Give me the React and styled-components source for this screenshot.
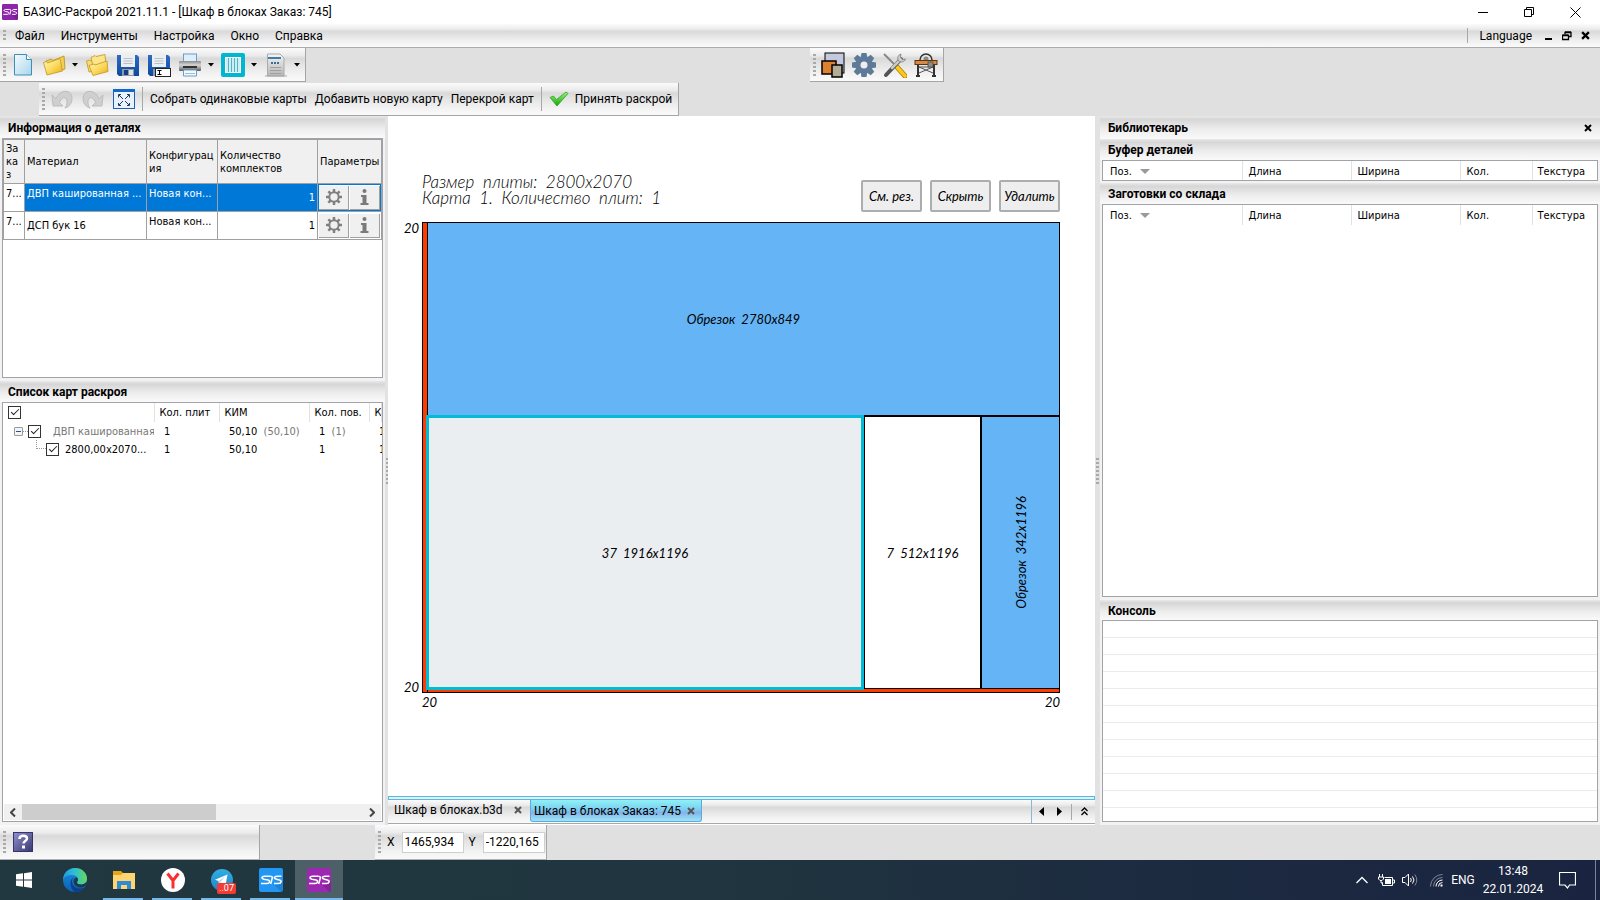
import React from "react";
import styled, { createGlobalStyle, css } from "styled-components";

const UI = `Roboto, "Noto Sans", sans-serif`;
const GRID = `"DejaVu Sans Condensed", "DejaVu Sans", sans-serif`;
const CAD = `Lato, "Open Sans", sans-serif`;

const barFill = "linear-gradient(#fbfbfb 0%, #ececec 22%, #d9d9d9 32%, #e4e4e4 50%, #f2f2f2 78%, #fafafa 100%)";

const GlobalStyle = createGlobalStyle`
  *, *::before, *::after { box-sizing: border-box; }
  body { margin: 0; background: #e0e0e0; color: #000; font: 12px/16px ${UI}; }
  button, input { font: inherit; color: inherit; margin: 0; padding: 0; border: 0; background: none; border-radius: 0; }
  button { cursor: default; }
  h1, h2 { margin: 0; font: inherit; }
  svg { display: block; flex: none; }
  table { border-collapse: collapse; border-spacing: 0; table-layout: fixed; width: 100%; }
  th, td { padding: 0; font-weight: 400; text-align: left; overflow: hidden; white-space: nowrap; }
`;

/* ---------- window shell ---------- */

const Window = styled.div`
  display: grid;
  grid-template-rows: 24px 24px 68px 1fr 35px 40px;
  grid-template-columns: minmax(0, 1fr);
  min-height: 100vh;
`;

const TitleBar = styled.header`
  display: flex;
  align-items: center;
  gap: 5px;
  padding: 0 2px;
  background: #fff;
`;

const AppTitle = styled.h1`
  flex: 1;
  font-size: 12px;
`;

const WindowButtons = styled.div`
  display: flex;
`;

const WindowButton = styled.button`
  display: grid;
  place-items: center;
  width: 46px;
  height: 24px;
`;

const MenuBar = styled.nav`
  display: flex;
  align-items: center;
  padding: 0 6px 0 2px;
  background: ${barFill};
  border-bottom: 1px solid #ababab;
`;

const MenuItem = styled.button`
  padding: 0 8px;
`;

const Spacer = styled.div`
  flex: 1;
`;

const ChildButton = styled.button`
  display: grid;
  place-items: center;
  width: 18px;
  height: 20px;
`;

const Grip = styled.span`
  flex: none;
  width: 3px;
  height: ${(p) => p.$h || 22}px;
  margin: 0 1px;
  background: repeating-linear-gradient(#a9a9a9 0 2px, transparent 2px 4px);
`;

const Rule = styled.span`
  flex: none;
  width: 1px;
  height: ${(p) => p.$h || 24}px;
  margin: 0 3px;
  background: #a8a8a8;
`;

/* ---------- toolbars ---------- */

const ToolArea = styled.div`
  display: grid;
  grid-template-rows: 34px 33px;
  row-gap: 1px;
`;

const ToolRow = styled.div`
  display: grid;
  grid-template-columns: ${(p) => p.$cols};
  padding-left: ${(p) => p.$indent || 0}px;
`;

const RightTools = styled.div`
  display: grid;
  padding-left: 10px;
`;

const Toolbar = styled.div`
  display: flex;
  align-items: center;
  justify-self: start;
  padding: 0 2px;
  background: ${barFill};
  border-right: 1px solid #a5a5a5;
  border-bottom: 1px solid #a5a5a5;
`;

const ToolButton = styled.button`
  display: grid;
  place-items: center;
  width: 31px;
  height: 28px;
`;

const DropButton = styled.button`
  display: grid;
  place-items: center;
  width: 12px;
  height: 28px;
`;

const TextTool = styled.button`
  display: flex;
  align-items: center;
  gap: 6px;
  height: 28px;
  padding: 0 4px;
  white-space: nowrap;
`;

/* ---------- panels ---------- */

const Workspace = styled.main`
  display: grid;
  grid-template-columns: 385px 3px minmax(0, 1fr) 5px 500px;
`;

const Splitter = styled.div`
  display: grid;
  place-items: center;
  background: #e2e2e2;
`;

const Side = styled.section`
  display: flex;
  flex-direction: column;
  min-width: 0;
  padding-bottom: 3px;
  background: #f2f2f2;
`;

const PanelTitle = styled.h2`
  display: flex;
  flex: none;
  align-items: center;
  justify-content: space-between;
  height: ${(p) => p.$h || 21}px;
  padding: 1px 8px 0;
  background: linear-gradient(#e9e9e9, #d6d6d6 15%, #ececec 55%, #fafafa);
  font-weight: 700;
`;

const Frame = styled.div`
  flex: ${(p) => (p.$h ? `0 0 ${p.$h}px` : "1 0 auto")};
  display: flex;
  flex-direction: column;
  margin: 0 2px ${(p) => p.$mb || 0}px;
  border: 1px solid #a2a2aa;
  background: #fff;
  font: 11px/13px ${GRID};
  overflow: hidden;
`;

const PartsTable = styled.table`
  th, td { border: 1px solid #a0a0a0; }
  th { height: 44px; padding: 0 2px; background: #f0f0f0; white-space: normal; word-break: break-all; }
  th:first-child { padding-right: 4px; }
  th:last-child { padding-right: 0; }
  td { height: 28px; padding: 0 2px; }
`;

const Cell = styled.td`
  vertical-align: ${(p) => (p.$top ? "top" : "middle")};
  text-align: ${(p) => (p.$right ? "right" : "left")};
  text-overflow: ellipsis;
  ${(p) => p.$selected && css`background: #0078d7; color: #fff;`}
  && { padding-top: ${(p) => (p.$top ? 3 : 0)}px; }
`;

const ActionsCell = styled.td`
  && { padding: 0; }
  ${(p) => p.$selected && css`box-shadow: inset 0 0 0 1px #0078d7;`}
`;

const Actions = styled.div`
  display: grid;
  grid-template-columns: 1fr 1fr;
  gap: 1px;
  padding: 1px;
`;

const CellButton = styled.button`
  display: grid;
  place-items: center;
  height: 24px;
  background: #f0f0f0;
  border-right: 1px solid #a0a0a0;
  border-bottom: 1px solid #a0a0a0;
`;

const MapTable = styled.table`
  td, th { height: 18px; padding-left: 10px; }
  td:first-child { padding-left: 9px; }
  th { height: 19px; padding-left: 5px; border-right: 1px solid #e2e2e2; }
`;

const Muted = styled.span`
  color: #777;
`;

const TreeCell = styled.div`
  display: flex;
  align-items: center;
  gap: ${(p) => p.$gap || 0}px;
  margin-left: ${(p) => p.$level || 0}px;
`;

const Check = styled.input`
  appearance: none;
  flex: none;
  width: 13px;
  height: 13px;
  border: 1px solid #333;
  background: #fff;
  display: grid;
  place-items: center;
  &:checked::after {
    content: "";
    width: 8px;
    height: 4px;
    margin-bottom: 3px;
    border-left: 1px solid #222;
    border-bottom: 1px solid #222;
    transform: rotate(-45deg);
  }
`;

const Expander = styled.button`
  flex: none;
  display: grid;
  place-items: center;
  width: 9px;
  height: 9px;
  border: 1px solid #999;
  border-radius: 1px;
  background: #f4f4f4;
  &::after { content: ""; width: 5px; height: 1px; background: #2b4f9c; }
`;

const Dots = styled.span`
  flex: none;
  width: ${(p) => p.$w}px;
  height: ${(p) => p.$h || 1}px;
  border-bottom: 1px dotted #999;
  border-left: ${(p) => (p.$h ? "1px dotted #999" : 0)};
  margin-bottom: ${(p) => (p.$h ? 9 : 0)}px;
`;

const ScrollBar = styled.div`
  display: grid;
  grid-template-columns: 18px 1fr 18px;
  align-items: center;
  height: 16px;
  margin: auto 1px 1px;
  background: #f0f0f0;
`;

const ScrollArrow = styled.button`
  display: grid;
  place-items: center;
`;

const Thumb = styled.div`
  width: 57%;
  height: 16px;
  background: #cdcdcd;
`;

const StockTable = styled.table`
  th { height: 20px; padding-left: 7px; border-right: 1px solid #e2e2e2; }
  th + th { padding-left: 6px; }
  th:last-child { border-right: 0; padding-left: 5px; }
`;

const SortHead = styled.span`
  display: flex;
  align-items: center;
  gap: 8px;
`;

const ConsoleLines = styled.div`
  flex: 1;
  background: repeating-linear-gradient(#fff 0 16px, #ececec 16px 17px);
`;

/* ---------- cutting map ---------- */

const Center = styled.section`
  display: grid;
  grid-template-rows: 1fr 4px 24px;
  background: #fff;
  padding-bottom: 1px;
`;

const Canvas = styled.div`
  padding: 58px 35px 20px 16px;
  font: italic 400 13px/16px ${CAD};
`;

const MapHead = styled.div`
  display: flex;
  justify-content: space-between;
  margin: 0 0 10px 18px;
`;

const MapInfo = styled.div`
  font-size: 17px;
  font-weight: 300;
  line-height: 16px;
  white-space: pre;
`;

const MapButtons = styled.div`
  display: flex;
  gap: 8px;
  margin-top: 6px;
`;

const MapButton = styled.button`
  width: 61px;
  height: 32px;
  background: #eee;
  border: 2px solid #adadad;
  border-radius: 2px;
`;

const MapGrid = styled.div`
  display: grid;
  grid-template-columns: 18px minmax(0, 1fr);
`;

const SideMarks = styled.div`
  display: flex;
  flex-direction: column;
  justify-content: space-between;
  line-height: 12px;
`;

const BottomMarks = styled.div`
  grid-column: 2;
  display: flex;
  justify-content: space-between;
  padding-top: 1px;
`;

const Board = styled.div`
  display: grid;
  grid-template-columns: 5px minmax(0, 1fr);
  grid-template-rows: minmax(0, 1fr) 4px;
  aspect-ratio: 638 / 471;
  border: 1px solid #000;
`;

const TrimLeft = styled.div`
  grid-row: 1 / 3;
  background: #ff3c00;
  border-right: 1px solid #000;
`;

const TrimBottom = styled.div`
  background: #ff3c00;
  border-top: 1px solid #000;
`;

const Cuts = styled.div`
  display: grid;
  grid-template-rows: 192fr 273fr;
`;

const CutRow = styled.div`
  display: grid;
  grid-template-columns: 436fr 116fr 79fr;
`;

const kinds = {
  offcut: css`background: #64b4f6;`,
  last: css`background: #64b4f6; border-top: 2px solid #000; border-left: 2px solid #000;`,
  part: css`background: #fff; border-top: 2px solid #000; border-left: 1px solid #000;`,
  active: css`background: #eaeef1; border: 3px solid #00bcd4; margin: 0 0 -2px -2px; z-index: 1;`,
};

const Piece = styled.div`
  display: grid;
  place-items: center;
  white-space: pre;
  ${(p) => kinds[p.$kind]}
`;

const Vertical = styled.span`
  writing-mode: vertical-rl;
  transform: rotate(180deg);
`;

const TabLine = styled.div`
  border: 1px solid #5fb4e0;
  background: #d8f4fb;
`;

const TabBar = styled.div`
  display: flex;
  background: ${barFill};
  border-bottom: 1px solid #a8a8a8;
`;

const Tab = styled.div`
  display: flex;
  align-items: center;
  justify-content: space-between;
  width: ${(p) => p.$w}px;
  height: 22px;
  padding: 0 8px 3px 6px;
  ${(p) => p.$active && css`
    padding: 0 6px 0 3px;
    background: linear-gradient(#8ff2f6, #7ccdf0 45%, #84b4e6 60%, #9be6fb);
    border: 1px solid #5fa9dc;
    border-top: 0;
    border-radius: 0 0 3px 3px;
  `}
`;

const TabNav = styled.div`
  display: flex;
  align-items: center;
  padding: 0 2px 0 0;
  border-left: 1px solid #8cb8d0;
`;

const NavButton = styled.button`
  display: grid;
  place-items: center;
  width: 18px;
  height: 20px;
`;

/* ---------- status bar ---------- */

const StatusBar = styled.footer`
  display: flex;
  gap: 115px;
`;

const StatusStrip = styled.div`
  display: flex;
  align-items: center;
  width: ${(p) => p.$w}px;
  padding-left: 2px;
  background: ${barFill};
  border-right: 1px solid #a5a5a5;
  border-bottom: 1px solid #b0b0b0;
`;

const Coord = styled.label`
  display: flex;
  align-items: center;
  gap: 7px;
  padding-left: 5px;
`;

const CoordInput = styled.input`
  width: 62px;
  height: 21px;
  border: 1px solid #cfcfcf;
  background: #fff;
  padding: 0 2px;
`;

/* ---------- taskbar ---------- */

const TaskBar = styled.footer`
  display: flex;
  align-items: stretch;
  background: linear-gradient(90deg, #213840, #20353f 45%, #1c2a40 75%, #1a2440);
  color: #fff;
`;

const TaskButtons = styled.div`
  display: flex;
  margin-left: 2px;
`;

const TaskButton = styled.button`
  display: grid;
  place-items: center;
  width: 49px;
  position: relative;
  ${(p) => p.$active && css`background: #4d6068; width: 48px;`}
  ${(p) => p.$running && css`
    &::after {
      content: "";
      position: absolute;
      bottom: 0;
      left: ${p.$active ? 0 : 4}px;
      right: ${p.$active ? 0 : 5}px;
      height: 2px;
      background: #76b9ed;
    }
  `}
`;

const StartButton = styled.button`
  display: grid;
  place-items: center;
  width: 48px;
`;

const Badge = styled.span`
  position: absolute;
  right: 10px;
  bottom: 6px;
  padding: 0 2px;
  border-radius: 2px;
  background: #f23b34;
  font: 9px/11px ${UI};
`;

const Tray = styled.div`
  display: flex;
  align-items: center;
  margin-left: auto;
`;

const TrayButton = styled.button`
  display: grid;
  place-items: center;
  width: ${(p) => p.$w || 24}px;
  height: 40px;
`;

const Clock = styled.time`
  width: 74px;
  line-height: 18px;
  text-align: center;
`;

const DesktopEdge = styled.button`
  width: 5px;
  height: 40px;
  margin-left: 11px;
  border-left: 1px solid #7b8494;
`;

/* ---------- drawings ---------- */

const Logo = ({ size, fill }) => (
  <svg width={size} height={size} viewBox="0 0 24 24">
    <rect width="24" height="24" rx="2" fill={fill} />
    <path d="M20 16l-5 .5L22 24h2V14l-2-2z" fill="#000" opacity=".13" />
    <g fill="none" stroke="#fff" strokeWidth="1.500" strokeLinejoin="round">
      <path d="M11.500 8.200H5.500c-3 0-3.500 2.300-.5 3l4 .8c2.500.6 2 3.500-1 3.500H2" />
      <path d="M22.500 8.200h-4.500c-3 0-3.500 2.300-.5 3l3 .8c2.500.6 2 3.500-1 3.500H15" />
      <path d="M11.500 8.200l2 1-1.800 6.800" />
    </g>
  </svg>
);

const Caret = () => (
  <svg width="6" height="4" viewBox="0 0 6 4"><path d="M0 0h6L3 3.500z" fill="#000" /></svg>
);

const Cross = ({ size = 8, color = "#000", w = 2 }) => (
  <svg width={size} height={size} viewBox="0 0 8 8">
    <path d="M1 1l6 6M7 1L1 7" stroke={color} strokeWidth={w} fill="none" />
  </svg>
);

const DefsSvg = styled.svg`
  position: absolute;
`;

const Gradients = () => (
  <DefsSvg width="0" height="0" viewBox="0 0 1 1" aria-hidden="true">
    <defs>
      <linearGradient id="gPage" x2="1" y2="1"><stop stopColor="#f4fbff" /><stop offset="1" stopColor="#a9d5ec" /></linearGradient>
      <linearGradient id="gFolder" x2="1" y2="1"><stop stopColor="#fff8c4" /><stop offset=".5" stopColor="#fbdc62" /><stop offset="1" stopColor="#e9ac1d" /></linearGradient>
      <linearGradient id="gDisk" x2="0" y2="1"><stop stopColor="#2d6bc4" /><stop offset="1" stopColor="#0d4a9e" /></linearGradient>
      <linearGradient id="gMetal" x2="0" y2="1"><stop stopColor="#8a8a8a" /><stop offset=".4" stopColor="#d6d6d6" /><stop offset="1" stopColor="#5d5d5d" /></linearGradient>
      <linearGradient id="gGrey" x2="0" y2="1"><stop stopColor="#f4f4f4" /><stop offset="1" stopColor="#b5b5b5" /></linearGradient>
      <linearGradient id="gHelp" x2="1" y2="1"><stop stopColor="#9091cf" /><stop offset="1" stopColor="#38386f" /></linearGradient>
      <linearGradient id="gTick" x2="0" y2="1"><stop stopColor="#9cf27c" /><stop offset="1" stopColor="#14a30b" /></linearGradient>
      <linearGradient id="gEdge" x2="1" y2="0"><stop stopColor="#1f9be0" /><stop offset=".5" stopColor="#2fc0cf" /><stop offset="1" stopColor="#66d95a" /></linearGradient>
      <linearGradient id="gEdge2" x2="0" y2="1"><stop stopColor="#1c8fe0" /><stop offset="1" stopColor="#0b5fb5" /></linearGradient>
      <linearGradient id="gTele" x2="0" y2="1"><stop stopColor="#33aee3" /><stop offset="1" stopColor="#1c86c8" /></linearGradient>
    </defs>
  </DefsSvg>
);

const NewIcon = () => (
  <svg width="22" height="24" viewBox="0 0 22 24">
    <path d="M2.500 1.500h12l5 5V22h-17z" fill="url(#gPage)" stroke="#3f8fb5" />
    <path d="M14.500 1.500v5h5" fill="#fff" stroke="#3f8fb5" />
  </svg>
);

const FolderIcon = () => (
  <svg width="24" height="24" viewBox="0 0 24 24">
    <path d="M5 21L4 8l5-2 2 1.500L22 3l1 13z" fill="#f3cf55" stroke="#b98c17" strokeWidth=".8" />
    <path d="M1.500 9.500l3-1 1 1.500L18 5.500 20.500 18 5 22z" fill="url(#gFolder)" stroke="#c29420" strokeWidth=".8" />
  </svg>
);

const FoldersIcon = () => (
  <svg width="24" height="24" viewBox="0 0 24 24">
    <path d="M1.500 8l3-1 1 1L12 6l-1 12-7 1z" fill="#f8dc76" stroke="#c29420" strokeWidth=".8" />
    <path d="M6 4.500l4-2 1 1L20 1.500l1 12-12 5z" fill="#fbe48a" stroke="#c29420" strokeWidth=".8" />
    <path d="M4 12.500l5-1.500 1 1 12-4 1 10.500L8 22.500z" fill="url(#gFolder)" stroke="#c29420" strokeWidth=".8" />
  </svg>
);

const DiskIcon = ({ edit }) => (
  <svg width="24" height="24" viewBox="0 0 24 24">
    <path d="M1 2h20l2 2v19H3l-2-2z" fill="url(#gDisk)" />
    <rect x="5" y="2" width="14" height="12" fill="#eceff2" />
    <path d="M7.500 5.500h9M7.500 8h9M7.500 10.500h9" stroke="#b9bec4" />
    <rect x="6" y="16" width="12" height="7" fill="#8f9aa5" />
    <rect x="8" y="17" width="4" height="5" fill="#123f87" />
    <rect x="13" y="17" width="4" height="5" fill="#dde3e8" />
    {edit && <rect x="8.500" y="15.500" width="15" height="8" fill="#fff" stroke="#222" />}
    {edit && <path d="M10.500 17.500h4M10.500 21.500h4M12.500 17.500v4" stroke="#000" />}
  </svg>
);

const PrinterIcon = () => (
  <svg width="24" height="24" viewBox="0 0 24 24">
    <rect x="5.500" y="1" width="13" height="9" fill="#dcefff" stroke="#6f9cc4" />
    <rect x="1" y="8" width="22" height="10" rx="1" fill="url(#gMetal)" />
    <rect x="5" y="13" width="14" height="2" fill="#333" />
    <path d="M5.500 17h13v6h-13z" fill="#f2f9ff" stroke="#6f9cc4" />
    <path d="M7 20.500h10" stroke="#8fc0e6" />
  </svg>
);

const MapIcon = () => (
  <svg width="24" height="24" viewBox="0 0 24 24">
    <rect width="24" height="24" rx="2" fill="#00b6d0" />
    <rect x="4.500" y="4.500" width="15" height="15" fill="#cdeff4" stroke="#fff" />
    <path d="M7.500 5v14M10.500 5v14M13.500 5v14M16.500 5v14" stroke="#4fb4c4" />
  </svg>
);

const ReportIcon = () => (
  <svg width="24" height="24" viewBox="0 0 24 24">
    <path d="M3.500 1H16l4 4v18h-16.500z" fill="url(#gGrey)" stroke="#aaa" />
    <rect x="4" y="4" width="13" height="2" fill="#3d7ea8" />
    <path d="M7 10h9" stroke="#3d6f95" strokeWidth="2" strokeDasharray="2 1" />
    <path d="M6 14.500h11M6 17.500h11M6 20.500h11" stroke="#a0a0a0" />
    <path d="M1 23h22" stroke="#a8a8a8" />
  </svg>
);

const LayersIcon = () => (
  <svg width="24" height="26" viewBox="0 0 24 26">
    <rect x="4" y="1" width="19" height="20" fill="#c4c9de" stroke="#000" />
    <rect x="1" y="9" width="14" height="13" fill="#dd8131" stroke="#000" strokeWidth="1.500" />
    <rect x="11" y="13" width="10" height="12" fill="#b3ad96" stroke="#000" strokeWidth="1.500" />
  </svg>
);

const teeth = [0, 45, 90, 135, 180, 225, 270, 315];

const CogIcon = () => (
  <svg width="24" height="26" viewBox="0 0 24 26">
    <g fill="#5d7b99">
      {teeth.map((a) => <path key={a} d="M9.500 1h5l1 6h-7z" transform={`rotate(${a} 12 13)`} />)}
      <circle cx="12" cy="13" r="8.500" />
    </g>
    <circle cx="12" cy="13" r="3.500" fill="#eee" />
  </svg>
);

const ToolsIcon = () => (
  <svg width="24" height="26" viewBox="0 0 24 26">
    <path d="M1 2l12 12" stroke="#888" strokeWidth="2" />
    <path d="M14 15l8 9" stroke="#a57b00" strokeWidth="5" strokeLinecap="round" />
    <path d="M14 15l8 9" stroke="#fcc81c" strokeWidth="3.500" strokeLinecap="round" />
    <path d="M3 23L18 7" stroke="#555" strokeWidth="4" strokeLinecap="round" />
    <path d="M9 16l9-9" stroke="#c9c9c9" strokeWidth="2.500" strokeLinecap="round" />
    <path d="M18 2c-3 1-4 4-2.500 6.500 2 2.500 6 1.500 7-1.500l-3.500.5L17.500 5z" fill="#d0d0d0" stroke="#777" strokeWidth=".8" />
  </svg>
);

const BenchIcon = () => (
  <svg width="24" height="26" viewBox="0 0 24 26">
    <path d="M6 8a6 6 0 0 1 12 0" fill="none" stroke="#333" strokeWidth="1.500" />
    <circle cx="12" cy="7" r="2.500" fill="#888" />
    <rect x="1" y="8.500" width="22" height="4" fill="#d98a42" stroke="#5a3512" />
    <path d="M4 13v11M20 13v11M2 24h4M18 24h4" stroke="#333" strokeWidth="2" />
    <path d="M5 15l14 6M19 15L5 21M5 15h14" stroke="#555" fill="none" />
    <rect x="14" y="10" width="5" height="5" fill="#8d8d8d" stroke="#444" strokeWidth=".7" />
  </svg>
);

const UndoIcon = ({ flip }) => (
  <svg width="24" height="20" viewBox="0 0 24 20">
    <g transform={flip ? "translate(24 0) scale(-1 1)" : undefined}>
      <path d="M2 6l1 11h10l-3.500-3.500C12 7 17 7 17 13c0 3-1 4.500-2 6 4-1 7-4.500 7-9.500C22 1 11-1 6 9.500z" fill="#cfcfcf" stroke="#b5b5b5" strokeWidth=".8" />
    </g>
  </svg>
);

const FitIcon = () => (
  <svg width="22" height="20" viewBox="0 0 22 20">
    <rect x=".5" y=".5" width="21" height="19" fill="#e8f2fd" stroke="#1d5fb8" />
    <rect width="22" height="3" fill="#1267c7" />
    <path d="M6 6l4 4M16 6l-4 4M6 16l4-4M16 16l-4-4M5.500 8.500v-3H8M14 5.500h2.500v3M16.500 14v2.500H14M8 16.500H5.500V14" stroke="#20395e" fill="none" />
  </svg>
);

const TickIcon = () => (
  <svg width="20" height="16" viewBox="0 0 20 16">
    <path d="M1 6.500L4.500 5l3 3.500L17 1l2 1.500L8 15z" fill="url(#gTick)" stroke="#2fa321" strokeWidth=".8" />
  </svg>
);

const GearSmall = () => (
  <svg width="16" height="16" viewBox="0 0 16 16">
    <g stroke="#808080" fill="none">
      {teeth.map((a) => <path key={a} d="M8 0v3" strokeWidth="2.500" transform={`rotate(${a} 8 8)`} />)}
      <circle cx="8" cy="8" r="4.700" strokeWidth="2" />
    </g>
  </svg>
);

const InfoSmall = () => (
  <svg width="9" height="16" viewBox="0 0 9 16">
    <circle cx="4.500" cy="2" r="2" fill="#7a7a7a" />
    <path d="M1 6h5.500v8H8.500v2H.5v-2h2V8H1z" fill="#7a7a7a" />
  </svg>
);

const HelpIcon = () => (
  <svg width="20" height="20" viewBox="0 0 20 20">
    <rect x=".5" y=".5" width="19" height="19" fill="url(#gHelp)" stroke="#34346a" />
    <path d="M6.500 7c0-4.500 7.500-4 7.500-.5 0 2.500-3.500 2.500-3.500 5" fill="none" stroke="#fff" strokeWidth="2.500" />
    <rect x="9" y="13.500" width="3" height="3" fill="#fff" />
  </svg>
);

const SortMark = () => (
  <svg width="10" height="5" viewBox="0 0 10 5"><path d="M0 0h10L5 5z" fill="#9a9a9a" /></svg>
);

const Chevron = ({ flip }) => (
  <svg width="6" height="9" viewBox="0 0 6 9">
    <path d={flip ? "M1 .5l4 4-4 4" : "M5 .5l-4 4 4 4"} fill="none" stroke="#444" strokeWidth="2" />
  </svg>
);

const Triangle = ({ flip }) => (
  <svg width="5" height="9" viewBox="0 0 5 9"><path d={flip ? "M0 0l5 4.500L0 9z" : "M5 0L0 4.500 5 9z"} fill="#000" /></svg>
);

const StartIcon = () => (
  <svg width="16" height="16" viewBox="0 0 16 16">
    <path d="M0 2.300l7-1v6.200H0zM8 1.200L16 0v7.500H8zM0 8.500h7v6.200l-7-1zM8 8.500h8V16l-8-1.200z" fill="#fff" />
  </svg>
);

const EdgeIcon = () => (
  <svg width="24" height="24" viewBox="0 0 24 24">
    <circle cx="12" cy="12" r="12" fill="url(#gEdge2)" />
    <path d="M0 11.500C.5 5 5.500 0 12 0c7 0 12 5 12 10.500 0 4-3 6-6 6-2.500 0-4-1-4-2s1-1.500 1-3c0-2-2-4.500-6-4.500-4.500 0-8 2-9 4.500z" fill="url(#gEdge)" />
    <path d="M7.500 15c0-3 1.500-5 4-6-1 .5-2.500 2-2.500 4.500 0 4 3.500 7 8 7 2 0 4-.8 5-1.500C20 22 16 24 12.500 24 9.500 23 7.500 19 7.500 15z" fill="#0c3f8c" />
    <path d="M15 11.500c0 1.500-1 2-1 3s1.500 2 4 2c1 0 4-.5 5.500-2.500l.5 2c-1.500 2.500-4.500 4-7.500 3.500-4-.7-6-3.500-6-6 0-2 1-3.500 2.500-4.300 1.500.4 2 1.300 2 2.300z" fill="#1f3a46" />
  </svg>
);

const ExplorerIcon = () => (
  <svg width="22" height="18" viewBox="0 0 22 18">
    <path d="M0 0h8l2 2h12v16H0z" fill="#e8a318" />
    <path d="M0 4h8l2-2h12v16H0z" fill="#fdd571" />
    <path d="M4 18v-8h14v8h-4v-4H8v4z" fill="#2f8ad8" />
  </svg>
);

const YandexIcon = () => (
  <svg width="24" height="24" viewBox="0 0 24 24">
    <circle cx="12" cy="12" r="12" fill="#fff" />
    <path d="M6.500 5.500l5.500 7 5.500-7M12 12v8.500" fill="none" stroke="#f8312f" strokeWidth="3" />
  </svg>
);

const TelegramIcon = () => (
  <svg width="22" height="24" viewBox="0 0 22 24">
    <circle cx="11" cy="12" r="11" fill="url(#gTele)" />
    <path d="M4 11.800L16.500 6.500 14.500 17.500 10 14.500 8.200 17 7.500 13z" fill="#fff" />
    <path d="M7.500 13l6.500-4.500-4.500 5.500-1.300 3z" fill="#b7d9ee" />
  </svg>
);

/* ---------- data ---------- */

const parts = [
  { id: 1, order: "7...", material: "ДВП кашированная ...", config: "Новая кон...", count: 1, selected: true },
  { id: 2, order: "7...", material: "ДСП бук 16", config: "Новая кон...", count: 1, selected: false },
];

const Col = styled.col`
  width: ${(p) => p.$w}px;
`;

const StockHeader = () => (
  <StockTable>
    <colgroup>
      <col /><Col $w={109} /><Col $w={109} /><Col $w={72} /><Col $w={65} />
    </colgroup>
    <thead>
      <tr>
        <th><SortHead>Поз. <SortMark /></SortHead></th>
        <th>Длина</th>
        <th>Ширина</th>
        <th>Кол.</th>
        <th>Текстура</th>
      </tr>
    </thead>
  </StockTable>
);

const Drop = ({ label }) => (
  <DropButton aria-label={label}><Caret /></DropButton>
);

export default function App() {
  return (
    <Window>
      <GlobalStyle />
      <TitleBar>
        <Gradients />
        <Logo size={16} fill="#8e24aa" />
        <AppTitle>БАЗИС-Раскрой 2021.11.1 - [Шкаф в блоках Заказ: 745]</AppTitle>
        <WindowButtons>
          <WindowButton aria-label="Свернуть">
            <svg width="10" height="10" viewBox="0 0 10 10"><path d="M0 5.500h10" stroke="#000" /></svg>
          </WindowButton>
          <WindowButton aria-label="Восстановить">
            <svg width="11" height="11" viewBox="0 0 11 11"><path d="M.5 2.500h7v7h-7zM2.500 2.500v-2h7v7h-2" stroke="#000" fill="none" /></svg>
          </WindowButton>
          <WindowButton aria-label="Закрыть">
            <svg width="11" height="11" viewBox="0 0 11 11"><path d="M.5.5l10 10M10.500.5l-10 10" stroke="#000" /></svg>
          </WindowButton>
        </WindowButtons>
      </TitleBar>

      <MenuBar>
        <Grip $h={12} />
        <MenuItem>Файл</MenuItem>
        <MenuItem>Инструменты</MenuItem>
        <MenuItem>Настройка</MenuItem>
        <MenuItem>Окно</MenuItem>
        <MenuItem>Справка</MenuItem>
        <Spacer />
        <Rule $h={15} />
        <MenuItem>Language</MenuItem>
        <ChildButton aria-label="Свернуть окно">
          <svg width="8" height="10" viewBox="0 0 8 10"><path d="M0 8h7" stroke="#000" strokeWidth="2" /></svg>
        </ChildButton>
        <ChildButton aria-label="Восстановить окно">
          <svg width="10" height="10" viewBox="0 0 10 10"><path d="M.5 4.500h6v4h-6zM.5 4h6M3 3V1.500h6v4H7M3 1h6" stroke="#000" fill="none" strokeWidth="1.300" /></svg>
        </ChildButton>
        <ChildButton aria-label="Закрыть окно"><Cross size={9} /></ChildButton>
      </MenuBar>

      <ToolArea>
        <ToolRow $cols="1fr 1fr">
          <Toolbar>
            <Grip />
            <ToolButton aria-label="Создать"><NewIcon /></ToolButton>
            <ToolButton aria-label="Открыть"><FolderIcon /></ToolButton><Drop label="Открыть недавние" />
            <ToolButton aria-label="Проекты"><FoldersIcon /></ToolButton>
            <ToolButton aria-label="Сохранить"><DiskIcon /></ToolButton>
            <ToolButton aria-label="Сохранить как"><DiskIcon edit /></ToolButton>
            <ToolButton aria-label="Печать"><PrinterIcon /></ToolButton><Drop label="Варианты печати" />
            <ToolButton aria-label="Карты"><MapIcon /></ToolButton><Drop label="Варианты карты" />
            <ToolButton aria-label="Отчёт"><ReportIcon /></ToolButton><Drop label="Варианты отчёта" />
          </Toolbar>
          <RightTools>
            <Toolbar>
              <Grip />
              <ToolButton aria-label="Материалы"><LayersIcon /></ToolButton>
              <ToolButton aria-label="Настройки"><CogIcon /></ToolButton>
              <ToolButton aria-label="Инструменты"><ToolsIcon /></ToolButton>
              <ToolButton aria-label="Станок"><BenchIcon /></ToolButton>
            </Toolbar>
          </RightTools>
        </ToolRow>
        <ToolRow $cols="1fr" $indent={39}>
          <Toolbar>
            <Grip />
            <ToolButton aria-label="Отменить"><UndoIcon /></ToolButton>
            <ToolButton aria-label="Вернуть"><UndoIcon flip /></ToolButton>
            <ToolButton aria-label="Показать всё"><FitIcon /></ToolButton>
            <Rule />
            <TextTool>Собрать одинаковые карты</TextTool>
            <TextTool>Добавить новую карту</TextTool>
            <TextTool>Перекрой карт</TextTool>
            <Rule />
            <TextTool><TickIcon />Принять раскрой</TextTool>
          </Toolbar>
        </ToolRow>
      </ToolArea>

      <Workspace>
        <Side>
          <PanelTitle $h={22}>Информация о деталях</PanelTitle>
          <Frame $h={240} $mb={3}>
            <PartsTable>
              <colgroup>
                <Col $w={21} /><col /><Col $w={71} /><Col $w={100} /><Col $w={64} />
              </colgroup>
              <thead>
                <tr>
                  <th>Заказ</th><th>Материал</th><th>Конфигурация</th><th>Количество<br />комплектов</th><th>Параметры</th>
                </tr>
              </thead>
              <tbody>
                {parts.map((p) => (
                  <tr key={p.id}>
                    <Cell $top>{p.order}</Cell>
                    <Cell $selected={p.selected} $top={p.selected}>{p.material}</Cell>
                    <Cell $selected={p.selected} $top>{p.config}</Cell>
                    <Cell $selected={p.selected} $right>{p.count}</Cell>
                    <ActionsCell $selected={p.selected}>
                      <Actions>
                        <CellButton aria-label="Параметры"><GearSmall /></CellButton>
                        <CellButton aria-label="Сведения"><InfoSmall /></CellButton>
                      </Actions>
                    </ActionsCell>
                  </tr>
                ))}
              </tbody>
            </PartsTable>
          </Frame>

          <PanelTitle>Список карт раскроя</PanelTitle>
          <Frame>
            <MapTable>
              <colgroup>
                <Col $w={151} /><Col $w={65} /><Col $w={90} /><Col $w={60} /><col />
              </colgroup>
              <thead>
                <tr>
                  <th><Check type="checkbox" defaultChecked aria-label="Все карты" /></th>
                  <th>Кол. плит</th><th>КИМ</th><th>Кол. пов.</th><th>К</th>
                </tr>
              </thead>
              <tbody>
                <tr>
                  <td>
                    <TreeCell $level={2}>
                      <Expander aria-label="Свернуть ветвь" />
                      <Dots $w={5} />
                      <TreeCell as="label" $gap={12}><Check type="checkbox" defaultChecked /><Muted>ДВП кашированная</Muted></TreeCell>
                    </TreeCell>
                  </td>
                  <td>1</td>
                  <td>50,10 &nbsp;<Muted>(50,10)</Muted></td>
                  <td>1 &nbsp;<Muted>(1)</Muted></td>
                  <td>1</td>
                </tr>
                <tr>
                  <td>
                    <TreeCell $level={24}>
                      <Dots $w={10} $h={9} />
                      <TreeCell as="label" $gap={6}><Check type="checkbox" defaultChecked />2800,00x2070...</TreeCell>
                    </TreeCell>
                  </td>
                  <td>1</td>
                  <td>50,10</td>
                  <td>1</td>
                  <td>1</td>
                </tr>
              </tbody>
            </MapTable>
            <ScrollBar>
              <ScrollArrow aria-label="Влево"><Chevron /></ScrollArrow>
              <Thumb />
              <ScrollArrow aria-label="Вправо"><Chevron flip /></ScrollArrow>
            </ScrollBar>
          </Frame>
        </Side>

        <Splitter><Grip $h={26} /></Splitter>

        <Center>
          <Canvas>
            <MapHead>
              <MapInfo>
                <div>Размер  плиты:  2800x2070</div>
                <div>Карта  1.  Количество  плит:  1</div>
              </MapInfo>
              <MapButtons>
                <MapButton>См. рез.</MapButton>
                <MapButton>Скрыть</MapButton>
                <MapButton>Удалить</MapButton>
              </MapButtons>
            </MapHead>
            <MapGrid>
              <SideMarks><span>20</span><span>20</span></SideMarks>
              <Board>
                <TrimLeft />
                <Cuts>
                  <Piece $kind="offcut">Обрезок  2780x849</Piece>
                  <CutRow>
                    <Piece $kind="active">37  1916x1196</Piece>
                    <Piece $kind="part">7  512x1196</Piece>
                    <Piece $kind="last"><Vertical>Обрезок  342x1196</Vertical></Piece>
                  </CutRow>
                </Cuts>
                <TrimBottom />
              </Board>
              <BottomMarks><span>20</span><span>20</span></BottomMarks>
            </MapGrid>
          </Canvas>
          <TabLine />
          <TabBar>
            <Tab $w={142}>Шкаф в блоках.b3d <button aria-label="Закрыть Шкаф в блоках.b3d"><Cross color="#555" /></button></Tab>
            <Tab $w={172} $active>Шкаф в блоках Заказ: 745 <button aria-label="Закрыть Шкаф в блоках Заказ: 745"><Cross color="#555" /></button></Tab>
            <Spacer />
            <TabNav>
              <NavButton aria-label="Предыдущая"><Triangle /></NavButton>
              <NavButton aria-label="Следующая"><Triangle flip /></NavButton>
              <Rule $h={16} />
              <NavButton aria-label="Список окон">
                <svg width="7" height="9" viewBox="0 0 7 9"><path d="M.5 4l3-3 3 3M.5 8l3-3 3 3" fill="none" stroke="#000" strokeWidth="1.300" /></svg>
              </NavButton>
            </TabNav>
          </TabBar>
        </Center>

        <Splitter><Grip $h={26} /></Splitter>

        <Side>
          <PanelTitle $h={23}>Библиотекарь <button aria-label="Закрыть панель"><Cross /></button></PanelTitle>
          <PanelTitle>Буфер деталей</PanelTitle>
          <Frame $h={21} $mb={2}><StockHeader /></Frame>
          <PanelTitle>Заготовки со склада</PanelTitle>
          <Frame $h={393} $mb={3}><StockHeader /></Frame>
          <PanelTitle $h={20}>Консоль</PanelTitle>
          <Frame><ConsoleLines /></Frame>
        </Side>
      </Workspace>

      <StatusBar>
        <StatusStrip $w={260}>
          <Grip />
          <ToolButton aria-label="Справка"><HelpIcon /></ToolButton>
        </StatusStrip>
        <StatusStrip $w={172}>
          <Grip />
          <Coord>X <CoordInput defaultValue="1465,934" /></Coord>
          <Coord>Y <CoordInput defaultValue="-1220,165" /></Coord>
        </StatusStrip>
      </StatusBar>

      <TaskBar>
        <StartButton aria-label="Пуск"><StartIcon /></StartButton>
        <TaskButtons>
          <TaskButton aria-label="Edge"><EdgeIcon /></TaskButton>
          <TaskButton aria-label="Проводник" $running><ExplorerIcon /></TaskButton>
          <TaskButton aria-label="Яндекс" $running><YandexIcon /></TaskButton>
          <TaskButton aria-label="Telegram" $running><TelegramIcon /><Badge>..07</Badge></TaskButton>
          <TaskButton aria-label="БАЗИС" $running><Logo size={24} fill="#2196f3" /></TaskButton>
          <TaskButton aria-label="БАЗИС-Раскрой" $running $active><Logo size={24} fill="#9c27b0" /></TaskButton>
        </TaskButtons>
        <Tray>
          <TrayButton aria-label="Скрытые значки">
            <svg width="12" height="8" viewBox="0 0 12 8"><path d="M.5 7L6 1.500 11.500 7" fill="none" stroke="#fff" strokeWidth="1.300" /></svg>
          </TrayButton>
          <TrayButton aria-label="Батарея">
            <svg width="17" height="13" viewBox="0 0 17 13">
              <path d="M6.500 3.500h8v8h-10v-3M15 6h1.500v3H15" fill="none" stroke="#fff" />
              <rect x="7" y="5" width="6" height="5" fill="#fff" />
              <path d="M1.500 0v3M4.500 0v3M.5 3h5v2L4 6.500H2L.5 5zM3 6v3h2" fill="none" stroke="#fff" />
            </svg>
          </TrayButton>
          <TrayButton aria-label="Громкость">
            <svg width="16" height="14" viewBox="0 0 16 14">
              <path d="M.5 4.500H3l3.500-3.500v12L3 9.500H.5z" fill="none" stroke="#fff" />
              <path d="M8.500 5q1.500 2 0 4M10.500 3.500q3 3.500 0 7" fill="none" stroke="#fff" />
              <path d="M12.800 1.500q4 5.500 0 11" fill="none" stroke="#7e8798" />
            </svg>
          </TrayButton>
          <TrayButton aria-label="Сеть" $w={28}>
            <svg width="13" height="13" viewBox="0 0 13 13">
              <path d="M.5 12.500A12 12 0 0 1 12.500.5M3.500 12.500a9 9 0 0 1 9-9" fill="none" stroke="#7e8798" />
              <path d="M6 12.500A6.500 6.500 0 0 1 12.500 6M8.500 12.500a4 4 0 0 1 4-4" fill="none" stroke="#fff" />
              <rect x="10.500" y="10.500" width="2" height="2" fill="#fff" />
            </svg>
          </TrayButton>
          <TrayButton $w={26}>ENG</TrayButton>
          <Clock>13:48<br />22.01.2024</Clock>
          <TrayButton aria-label="Уведомления" $w={34}>
            <svg width="17" height="17" viewBox="0 0 17 17"><path d="M.5.500h16v12.500h-6L8.500 16 6 13H.5z" fill="none" stroke="#fff" strokeWidth="1.200" /></svg>
          </TrayButton>
          <DesktopEdge aria-label="Показать рабочий стол" />
        </Tray>
      </TaskBar>
    </Window>
  );
}
